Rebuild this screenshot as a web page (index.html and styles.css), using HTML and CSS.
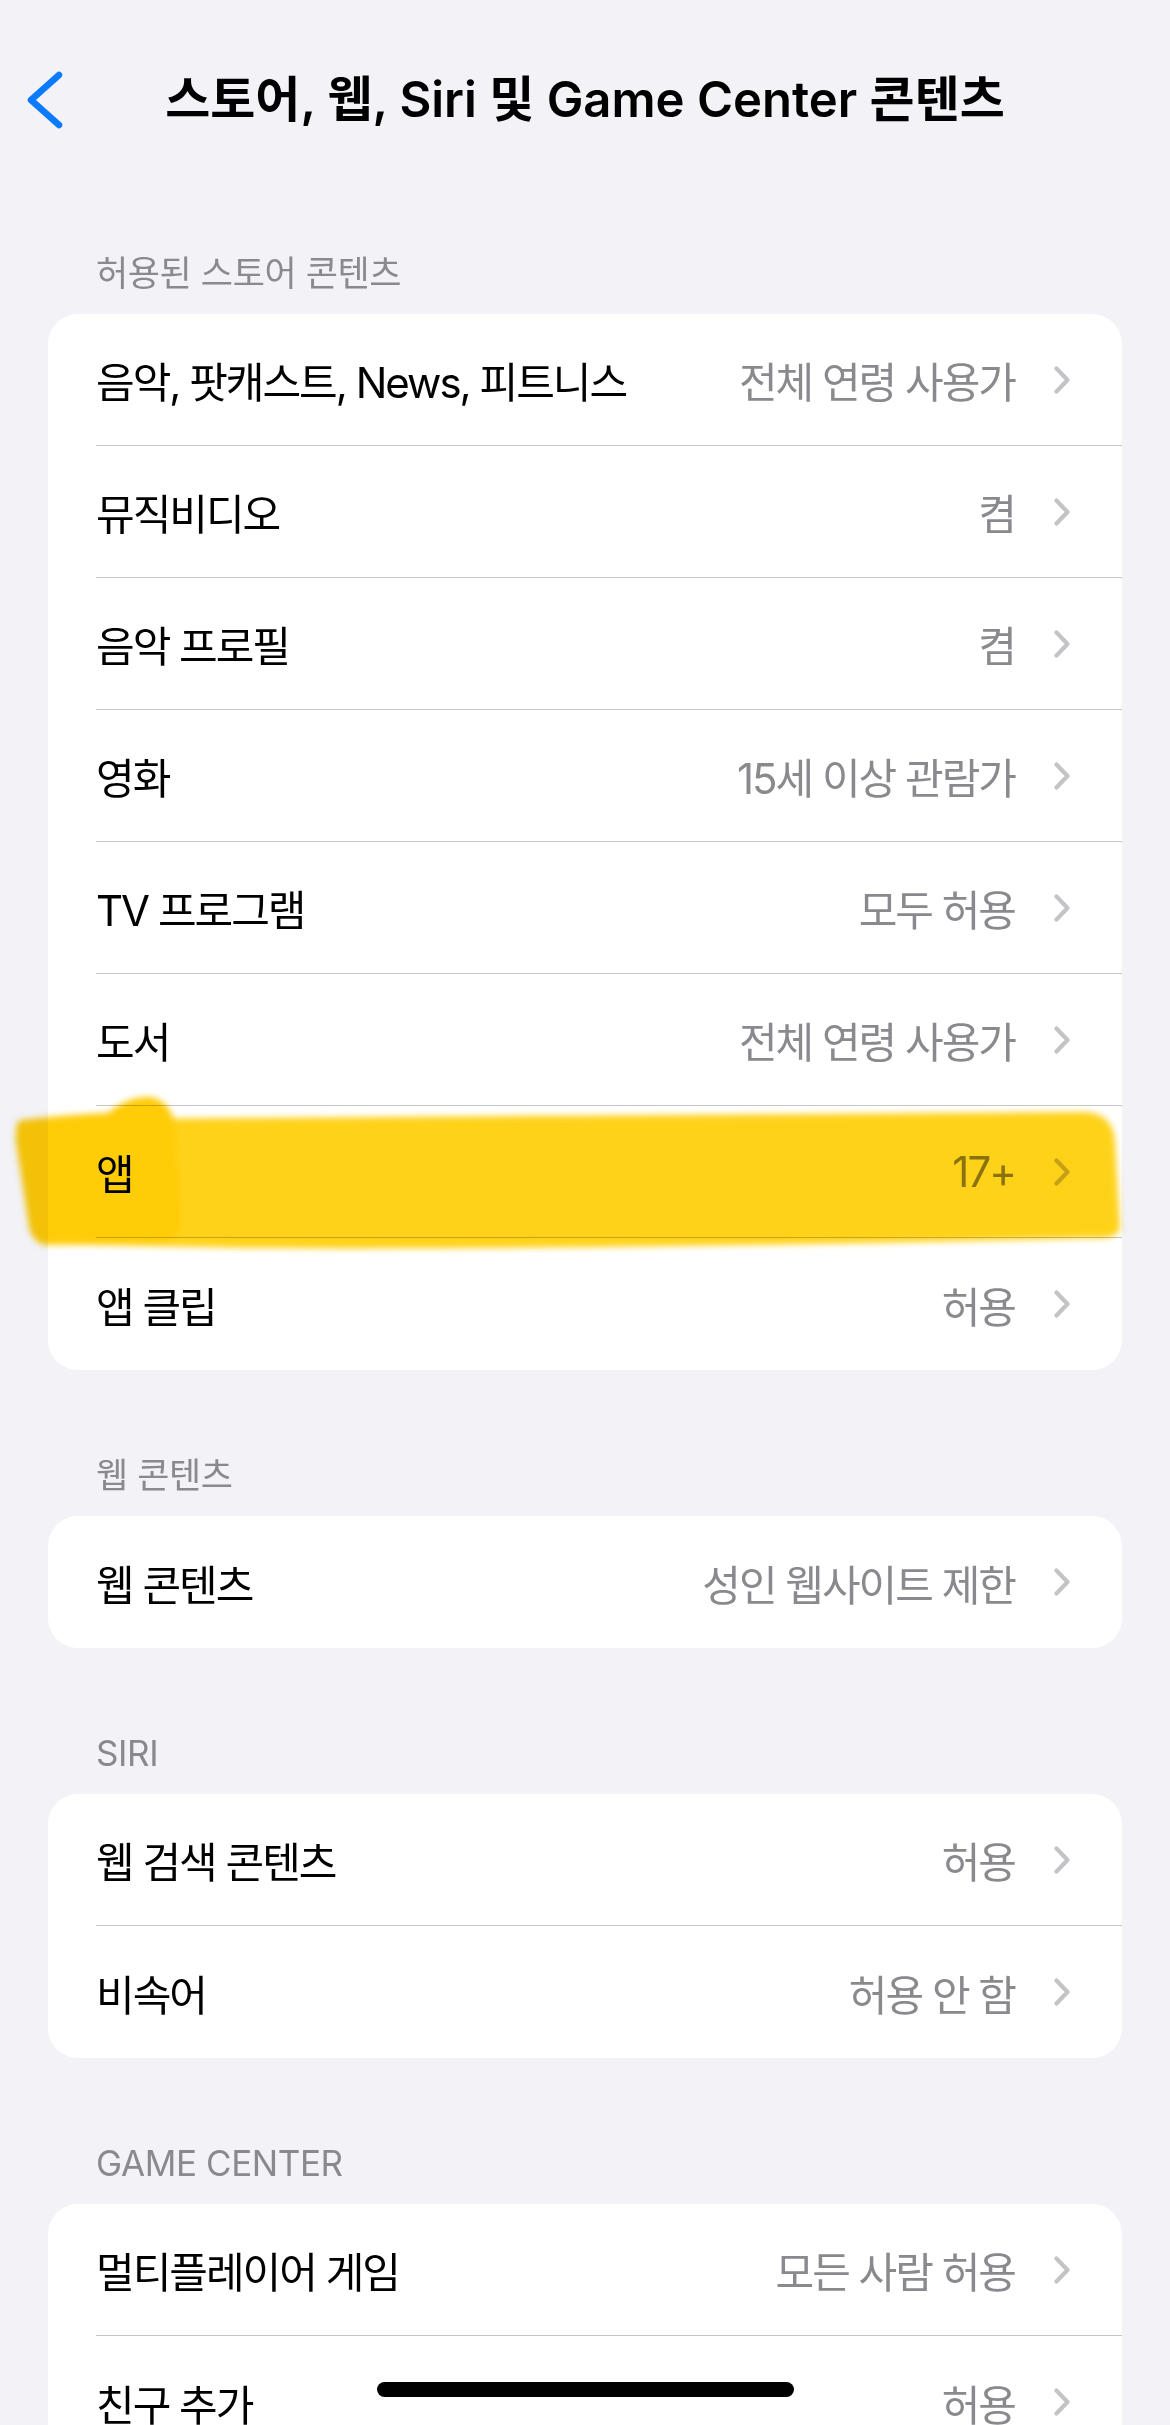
FILE: index.html
```html
<!DOCTYPE html>
<html lang="ko">
<head>
<meta charset="utf-8">
<title>스토어, 웹, Siri 및 Game Center 콘텐츠</title>
<link rel="stylesheet" href="styles.css">
</head>
<body>
<div class="screen">
  <header class="nav">
    <div class="back">
      <svg viewBox="0 0 40 60" aria-hidden="true"><path d="M34 5 L6 30 L34 55" fill="none" stroke="#0a7aff" stroke-width="6.5" stroke-linecap="round" stroke-linejoin="round"/></svg>
    </div>
    <h1 class="title">스토어, 웹, Siri 및 Game Center 콘텐츠</h1>
    <div></div>
  </header>

  <section class="section first">
    <div class="section-header">허용된 스토어 콘텐츠</div>
    <div class="card">
      <div class="row"><div class="row-inner"><span class="label">음악, 팟캐스트, News, 피트니스</span><span class="value">전체 연령 사용가</span><svg class="chev" viewBox="0 0 16 28"><path d="M2.5 2.5 L13.5 14 L2.5 25.5"/></svg></div></div>
      <div class="row"><div class="row-inner"><span class="label">뮤직비디오</span><span class="value">켬</span><svg class="chev" viewBox="0 0 16 28"><path d="M2.5 2.5 L13.5 14 L2.5 25.5"/></svg></div></div>
      <div class="row"><div class="row-inner"><span class="label">음악 프로필</span><span class="value">켬</span><svg class="chev" viewBox="0 0 16 28"><path d="M2.5 2.5 L13.5 14 L2.5 25.5"/></svg></div></div>
      <div class="row"><div class="row-inner"><span class="label">영화</span><span class="value">15세 이상 관람가</span><svg class="chev" viewBox="0 0 16 28"><path d="M2.5 2.5 L13.5 14 L2.5 25.5"/></svg></div></div>
      <div class="row"><div class="row-inner"><span class="label">TV 프로그램</span><span class="value">모두 허용</span><svg class="chev" viewBox="0 0 16 28"><path d="M2.5 2.5 L13.5 14 L2.5 25.5"/></svg></div></div>
      <div class="row"><div class="row-inner"><span class="label">도서</span><span class="value">전체 연령 사용가</span><svg class="chev" viewBox="0 0 16 28"><path d="M2.5 2.5 L13.5 14 L2.5 25.5"/></svg></div></div>
      <div class="row"><div class="row-inner"><span class="label">앱</span><span class="value">17+</span><svg class="chev" viewBox="0 0 16 28"><path d="M2.5 2.5 L13.5 14 L2.5 25.5"/></svg></div></div>
      <div class="row"><div class="row-inner"><span class="label">앱 클립</span><span class="value">허용</span><svg class="chev" viewBox="0 0 16 28"><path d="M2.5 2.5 L13.5 14 L2.5 25.5"/></svg></div></div>
    </div>
  </section>

  <section class="section">
    <div class="section-header">웹 콘텐츠</div>
    <div class="card">
      <div class="row"><div class="row-inner"><span class="label">웹 콘텐츠</span><span class="value">성인 웹사이트 제한</span><svg class="chev" viewBox="0 0 16 28"><path d="M2.5 2.5 L13.5 14 L2.5 25.5"/></svg></div></div>
    </div>
  </section>

  <section class="section">
    <div class="section-header">SIRI</div>
    <div class="card">
      <div class="row"><div class="row-inner"><span class="label">웹 검색 콘텐츠</span><span class="value">허용</span><svg class="chev" viewBox="0 0 16 28"><path d="M2.5 2.5 L13.5 14 L2.5 25.5"/></svg></div></div>
      <div class="row"><div class="row-inner"><span class="label">비속어</span><span class="value">허용 안 함</span><svg class="chev" viewBox="0 0 16 28"><path d="M2.5 2.5 L13.5 14 L2.5 25.5"/></svg></div></div>
    </div>
  </section>

  <section class="section">
    <div class="section-header">GAME CENTER</div>
    <div class="card">
      <div class="row"><div class="row-inner"><span class="label">멀티플레이어 게임</span><span class="value">모든 사람 허용</span><svg class="chev" viewBox="0 0 16 28"><path d="M2.5 2.5 L13.5 14 L2.5 25.5"/></svg></div></div>
      <div class="row"><div class="row-inner"><span class="label">친구 추가</span><span class="value">허용</span><svg class="chev" viewBox="0 0 16 28"><path d="M2.5 2.5 L13.5 14 L2.5 25.5"/></svg></div></div>
    </div>
  </section>

  <svg class="highlight" viewBox="0 0 1170 190" aria-hidden="true">
    <path class="hl-band" d="M20 40 C300 37 700 35 1085 32 Q1112 33 1115 60 L1120 148 Q1118 160 1090 158 C800 165 500 170 250 168 L45 164 Q32 161 30 140 L16 62 Q15 42 20 40 Z"/>
    <path class="hl-dab" d="M22 40 Q60 35 108 33 Q128 16 150 17 Q170 20 175 45 L182 138 Q182 160 160 163 L45 165 Q30 162 28 140 L16 62 Q15 43 22 40 Z"/>
  </svg>

  <div class="home"></div>
</div>
</body>
</html>
```

FILE: styles.css
```css
* {
  box-sizing: border-box;
}

html,
body {
  margin: 0;
  padding: 0;
}

body {
  background: #f2f2f7;
  font-family: "Inter", "Noto Sans CJK KR", sans-serif;
  color: #000;
}

.screen {
  position: relative;
  width: 1170px;
  height: 2425px;
  overflow: hidden;
  background: #f2f2f7;
}

.nav {
  height: 200px;
  display: grid;
  grid-template-columns: 1fr auto 1fr;
  align-items: center;
}

.back {
  padding-left: 25px;
  display: flex;
  align-items: center;
}

.back svg {
  width: 40px;
  height: 60px;
  display: block;
}

.title {
  margin: 0;
  font-size: 49px;
  font-weight: 600;
  letter-spacing: 0;
  line-height: 60px;
  white-space: nowrap;
}

.section {
  margin-top: 85px;
}

.section.first {
  margin-top: 53px;
}

.section-header {
  padding: 0 96px;
  font-size: 35px;
  line-height: 40px;
  letter-spacing: -0.4px;
  color: #8a8a8e;
  margin-bottom: 21px;
}

.card {
  margin: 0 48px;
  background: #fff;
  border-radius: 30px;
  overflow: hidden;
}

.row {
  padding-left: 48px;
}

.row-inner {
  height: 132px;
  display: flex;
  align-items: center;
  padding-right: 52px;
  border-bottom: 1px solid #c6c6c8;
}

.row:last-child .row-inner {
  border-bottom: none;
}

.label {
  flex: 1;
  font-size: 42px;
  letter-spacing: -2px;
  white-space: nowrap;
}

.value {
  font-size: 42px;
  letter-spacing: -2px;
  color: #8a8a8e;
  margin-right: 39px;
  white-space: nowrap;
}

.chev {
  flex: none;
  width: 16px;
  height: 28px;
  display: block;
}

.chev path {
  fill: none;
  stroke: #c4c4c7;
  stroke-width: 4.2;
  stroke-linecap: round;
  stroke-linejoin: round;
}

.highlight {
  position: absolute;
  left: 0;
  top: 1080px;
  width: 1170px;
  height: 190px;
  mix-blend-mode: multiply;
  filter: blur(3px);
  pointer-events: none;
}

.hl-band {
  fill: #ffd21a;
}

.hl-dab {
  fill: #ffcc08;
}

.home {
  position: absolute;
  left: 50%;
  bottom: 28px;
  width: 417px;
  height: 15px;
  margin-left: -208px;
  border-radius: 8px;
  background: #000;
}
```
